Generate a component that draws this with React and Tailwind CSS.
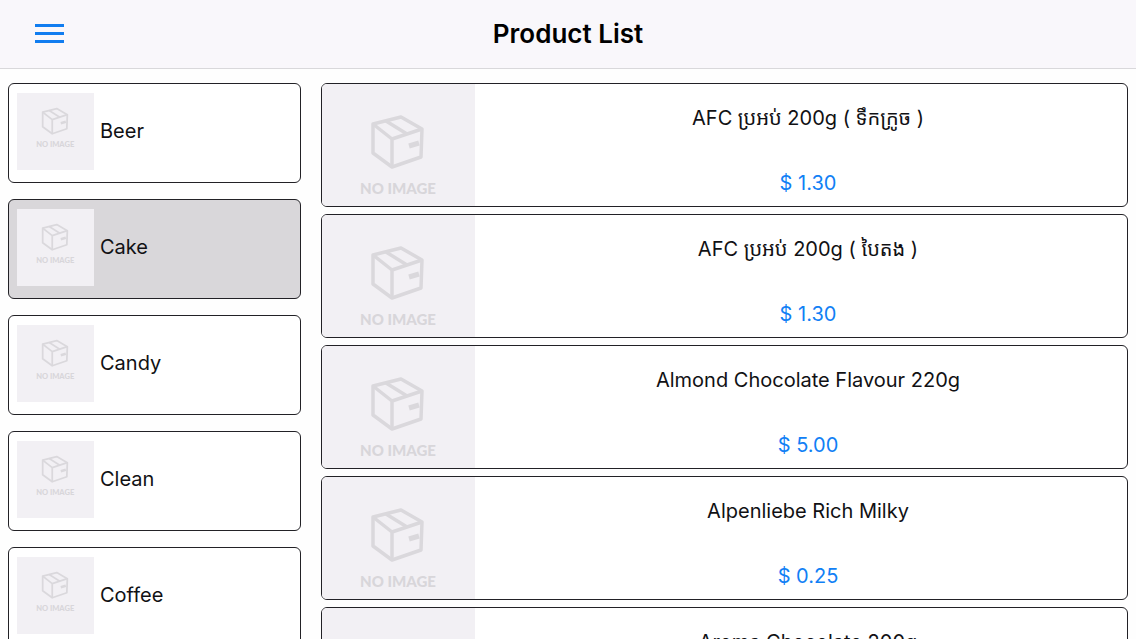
import { useState } from "react";

const categories = ["Beer", "Cake", "Candy", "Clean", "Coffee"];

const products = [
  { name: "AFC ប្រអប់ 200g ( ទឹកក្រូច )", price: "$ 1.30" },
  { name: "AFC ប្រអប់ 200g ( បៃតង )", price: "$ 1.30" },
  { name: "Almond Chocolate Flavour 220g", price: "$ 5.00" },
  { name: "Alpenliebe Rich Milky", price: "$ 0.25" },
  { name: "Aroma Chocolate 200g", price: "$ 5.00" },
];

function NoImage({ className }) {
  return (
    <svg viewBox="0 0 153 153" className={className} role="img" aria-label="No image">
      <rect width="153" height="153" fill="#f2f0f4" />
      <g fill="none" stroke="#dad8dc" strokeWidth="3.5" strokeLinejoin="round">
        <path d="M51 38 79 31 100 43 99 71 70 81 51 67Z" />
        <path d="M51 38 70 53 100 43M70 53V81" />
        <path d="M64 35 85 48" />
        <path d="M87 60 97 57" strokeWidth="5" />
      </g>
      <text
        x="76"
        y="108"
        textAnchor="middle"
        fill="#d8d6da"
        className="font-['Lato',sans-serif] text-[15px] font-black"
      >
        NO IMAGE
      </text>
    </svg>
  );
}

function CategoryCard({ name, selected, onSelect }) {
  return (
    <button
      type="button"
      aria-pressed={selected}
      onClick={onSelect}
      className={`flex h-[100px] w-full shrink-0 items-start rounded-md border border-[#222126] p-2 text-left ${
        selected ? "bg-[#d9d7da]" : "bg-white"
      }`}
    >
      <NoImage className="mt-px size-[77px] shrink-0" />
      <span className="ml-1.5 mt-[25px] text-xl leading-7">{name}</span>
    </button>
  );
}

function ProductCard({ name, price }) {
  return (
    <li className="flex h-[124px] shrink-0 overflow-hidden rounded-md border border-[#222126] bg-white">
      <div className="w-[153px] shrink-0 overflow-hidden bg-[#f2f0f4] pt-0.5">
        <NoImage className="size-[153px]" />
      </div>
      <div className="flex flex-1 flex-col items-center gap-[37px] pl-3.5 pt-5 text-xl leading-7">
        <h2>{name}</h2>
        <p className="text-[#1180f5]">{price}</p>
      </div>
    </li>
  );
}

export default function App() {
  const [selected, setSelected] = useState("Cake");
  return (
    <div className="flex h-screen flex-col overflow-hidden bg-[#fefefe] font-['Inter','Noto_Sans_Khmer',sans-serif] text-[#111114]">
      <header className="grid h-[69px] shrink-0 grid-cols-[1fr_auto_1fr] items-center border-b border-[#d9d8db] bg-[#f9f7fb] px-[35px]">
        <button type="button" aria-label="Menu" className="flex w-[29px] flex-col gap-[5px] pb-0.5">
          <span className="h-[3px] w-full bg-[#117df0]" />
          <span className="h-[3px] w-full bg-[#117df0]" />
          <span className="h-[3px] w-full bg-[#117df0]" />
        </button>
        <h1 className="text-[26px] font-semibold leading-8 text-black">Product List</h1>
      </header>
      <main className="flex min-h-0 flex-1 gap-5 px-2 pt-3.5">
        <nav aria-label="Categories" className="flex w-[293px] shrink-0 flex-col gap-4 overflow-hidden">
          {categories.map((name) => (
            <CategoryCard
              key={name}
              name={name}
              selected={name === selected}
              onSelect={() => setSelected(name)}
            />
          ))}
        </nav>
        <ul className="flex flex-1 flex-col gap-[7px] overflow-hidden">
          {products.map((product) => (
            <ProductCard key={product.name} {...product} />
          ))}
        </ul>
      </main>
    </div>
  );
}
